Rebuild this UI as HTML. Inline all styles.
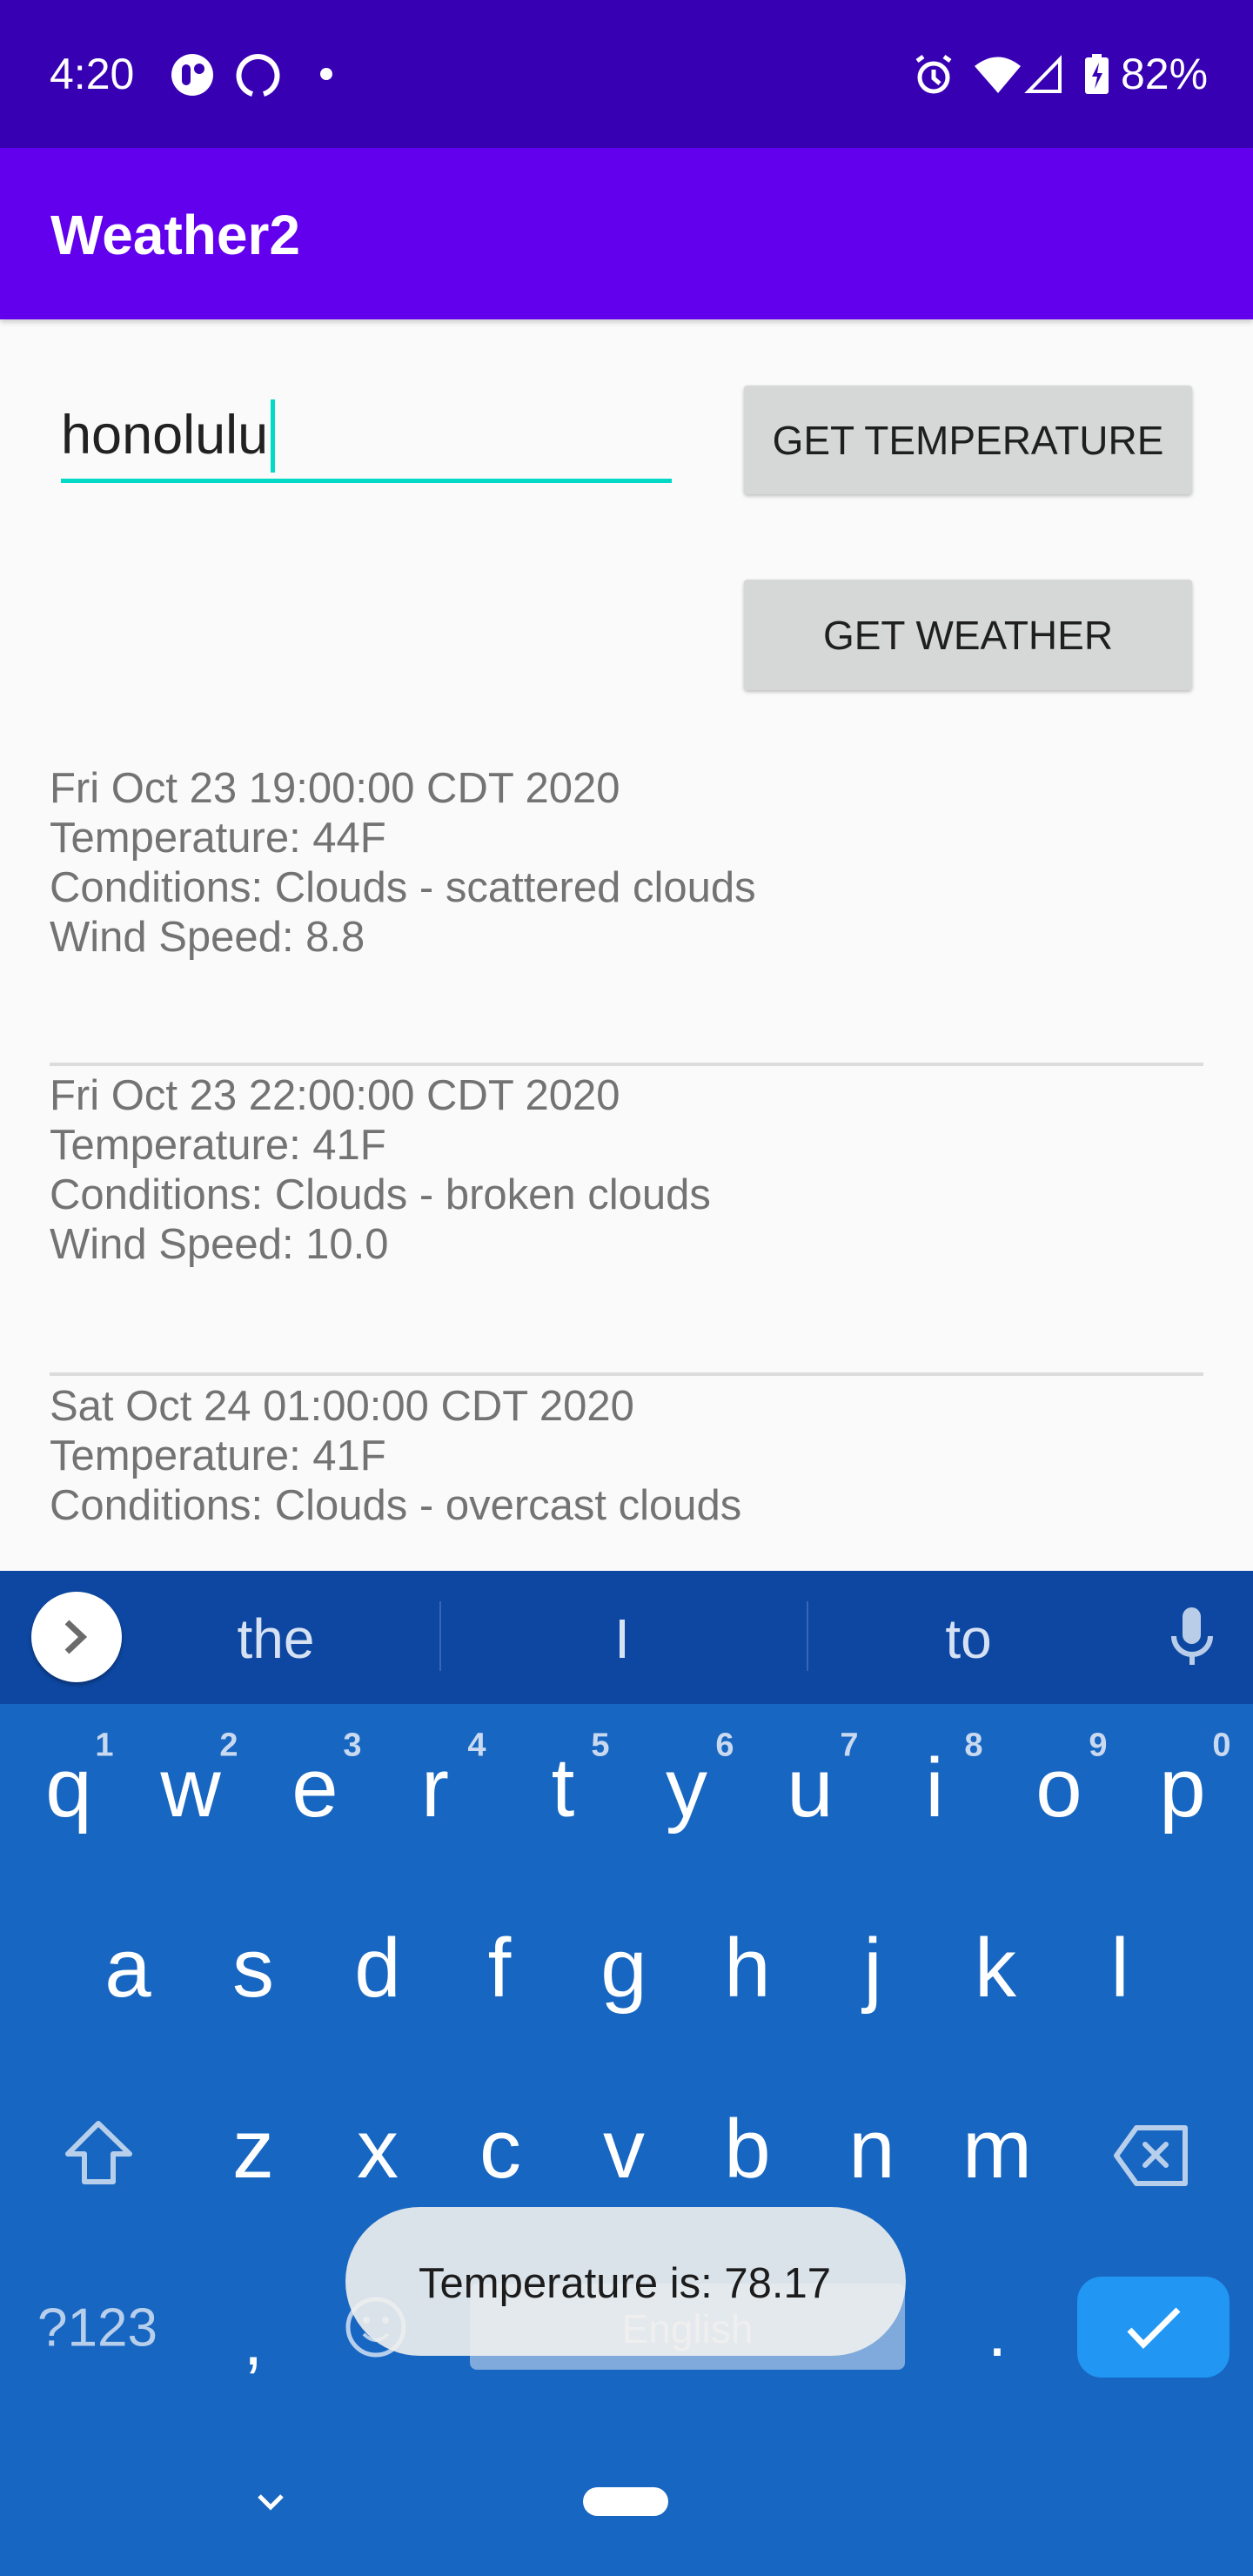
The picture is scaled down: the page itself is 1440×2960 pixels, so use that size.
<!DOCTYPE html>
<html><head><meta charset="utf-8"><style>
*{margin:0;padding:0;box-sizing:border-box}
body{width:1440px;height:2960px;position:relative;overflow:hidden;background:#fafafa;font-family:"Liberation Sans",sans-serif}
.a{position:absolute}
.c{position:absolute;transform:translate(-50%,-50%);white-space:nowrap}
.item{position:absolute;left:57px;font-size:49px;line-height:57px;color:#737373;white-space:nowrap}
.div{position:absolute;left:57px;width:1326px;height:4px;background:#dcdcdc}
.btn{position:absolute;left:855px;width:515px;background:#d6d7d7;border-radius:4px;box-shadow:0 2px 4px rgba(0,0,0,.25);color:#1f1f1f;font-size:46px;display:flex;align-items:center;justify-content:center}
.k{position:absolute;transform:translate(-50%,-50%);color:#fff;font-size:96px;line-height:1}
.n{position:absolute;transform:translate(-50%,-50%);color:#c9d9f0;font-size:38px;font-weight:bold}
</style></head><body>
<!-- status bar -->
<div class="a" style="left:0;top:0;width:1440px;height:170px;background:#3700b3"></div>
<div class="a" style="left:57px;top:56px;color:#fff;font-size:50px;line-height:58px">4:20</div>
<svg class="a" style="left:0;top:0" width="1440" height="170">
<circle cx="221" cy="86" r="24" fill="#fff"/>
<rect x="209" y="74" width="10" height="24" rx="5" fill="#3700b3"/>
<circle cx="229" cy="79" r="6" fill="#3700b3"/>
<path d="M290 108 A22 22 0 1 1 303 108" fill="none" stroke="#fff" stroke-width="6"/>
<circle cx="375" cy="85" r="7" fill="#fff"/>
<g fill="none" stroke="#fff" stroke-width="5">
<circle cx="1073" cy="89" r="16"/><path d="M1073 80v10l7 6M1054 70l7-5M1092 70l-7-5"/>
</g>
<path d="M1120 76 Q1147 55 1173 76 L1147 107Z" fill="#fff"/>
<path d="M1182 105 L1218 68 L1218 105Z" fill="none" stroke="#fff" stroke-width="4"/>
<rect x="1247" y="66" width="27" height="42" rx="3" fill="#fff"/><rect x="1255" y="62" width="11" height="5" fill="#fff"/>
<path d="M1263 72 L1255 88 L1261 88 L1258 102 L1267 84 L1261 84Z" fill="#3700b3"/>
</svg>
<div class="a" style="left:1288px;top:56px;color:#fff;font-size:50px;line-height:58px">82%</div>
<!-- app bar -->
<div class="a" style="left:0;top:170px;width:1440px;height:197px;background:#6200ee;box-shadow:0 3px 6px rgba(0,0,0,.2)"></div>
<div class="a" style="left:58px;top:232px;color:#fff;font-size:64px;font-weight:bold;line-height:76px">Weather2</div>
<!-- edit text -->
<div class="a" style="left:70px;top:460px;font-size:63px;line-height:80px;color:#212121">honolulu</div>
<div class="a" style="left:311px;top:459px;width:5px;height:84px;background:#03dac5"></div>
<div class="a" style="left:70px;top:550px;width:702px;height:5px;background:#03dac5"></div>
<div class="btn" style="top:443px;height:125px">GET TEMPERATURE</div>
<div class="btn" style="top:666px;height:127px">GET WEATHER</div>
<!-- list -->
<div class="item" style="top:878px">Fri Oct 23 19:00:00 CDT 2020<br>Temperature: 44F<br>Conditions: Clouds - scattered clouds<br>Wind Speed: 8.8</div>
<div class="div" style="top:1221px"></div>
<div class="item" style="top:1231px">Fri Oct 23 22:00:00 CDT 2020<br>Temperature: 41F<br>Conditions: Clouds - broken clouds<br>Wind Speed: 10.0</div>
<div class="div" style="top:1577px"></div>
<div class="item" style="top:1588px">Sat Oct 24 01:00:00 CDT 2020<br>Temperature: 41F<br>Conditions: Clouds - overcast clouds</div>
<!-- keyboard -->
<div class="a" style="left:0;top:1805px;width:1440px;height:1155px;background:#1766c1"></div>
<div class="a" style="left:0;top:1805px;width:1440px;height:153px;background:#0d47a1"></div>
<div class="a" style="left:36px;top:1829px;width:104px;height:104px;border-radius:50%;background:#fff;box-shadow:0 3px 4px rgba(0,0,0,.3)"></div>
<svg class="a" style="left:0;top:1800px" width="1440" height="160">
<path d="M77 64 L95 81 L77 98" fill="none" stroke="#6b6b6b" stroke-width="7"/>
<rect x="505" y="40" width="2" height="80" fill="#3a65b0"/><rect x="927" y="40" width="2" height="80" fill="#3a65b0"/>
<rect x="1359" y="47" width="21" height="42" rx="10.5" fill="#b9cde9"/>
<path d="M1349 80 A21 21 0 0 0 1391 80 M1370 101 V113" fill="none" stroke="#b9cde9" stroke-width="6"/>
</svg>
<div class="c" style="left:317px;top:1883px;color:#d6e2f4;font-size:64px">the</div>
<div class="c" style="left:715px;top:1883px;color:#d6e2f4;font-size:64px">I</div>
<div class="c" style="left:1113px;top:1883px;color:#d6e2f4;font-size:64px">to</div>
<!-- row1 -->
<div class="k" style="left:79px;top:2055px">q</div><div class="n" style="left:120px;top:2006px">1</div>
<div class="k" style="left:219px;top:2055px">w</div><div class="n" style="left:263px;top:2006px">2</div>
<div class="k" style="left:362px;top:2055px">e</div><div class="n" style="left:405px;top:2006px">3</div>
<div class="k" style="left:500px;top:2055px">r</div><div class="n" style="left:548px;top:2006px">4</div>
<div class="k" style="left:647px;top:2055px">t</div><div class="n" style="left:690px;top:2006px">5</div>
<div class="k" style="left:789px;top:2055px">y</div><div class="n" style="left:833px;top:2006px">6</div>
<div class="k" style="left:931px;top:2055px">u</div><div class="n" style="left:976px;top:2006px">7</div>
<div class="k" style="left:1074px;top:2055px">i</div><div class="n" style="left:1119px;top:2006px">8</div>
<div class="k" style="left:1217px;top:2055px">o</div><div class="n" style="left:1262px;top:2006px">9</div>
<div class="k" style="left:1359px;top:2055px">p</div><div class="n" style="left:1404px;top:2006px">0</div>
<!-- row2 -->
<div class="k" style="left:147px;top:2262px">a</div>
<div class="k" style="left:291px;top:2262px">s</div>
<div class="k" style="left:434px;top:2262px">d</div>
<div class="k" style="left:574px;top:2262px">f</div>
<div class="k" style="left:717px;top:2262px">g</div>
<div class="k" style="left:859px;top:2262px">h</div>
<div class="k" style="left:1003px;top:2262px">j</div>
<div class="k" style="left:1144px;top:2262px">k</div>
<div class="k" style="left:1287px;top:2262px">l</div>
<!-- row3 -->
<div class="k" style="left:291px;top:2470px">z</div>
<div class="k" style="left:434px;top:2470px">x</div>
<div class="k" style="left:575px;top:2470px">c</div>
<div class="k" style="left:717px;top:2470px">v</div>
<div class="k" style="left:859px;top:2470px">b</div>
<div class="k" style="left:1002px;top:2470px">n</div>
<div class="k" style="left:1146px;top:2470px">m</div>
<svg class="a" style="left:0;top:2400px" width="1440" height="360">
<path d="M113 40 L78 75 L97 75 L97 107 L130 107 L130 75 L149 75Z" fill="none" stroke="#b8cfec" stroke-width="6" stroke-linejoin="round"/>
<path d="M1306 45 L1362 45 L1362 109 L1306 109 L1283 77Z" fill="none" stroke="#b8cfec" stroke-width="6" stroke-linejoin="round"/>
<path d="M1316 64 L1340 88 M1340 64 L1316 88" stroke="#b8cfec" stroke-width="6" stroke-linecap="round"/>
<circle cx="432" cy="274" r="32" fill="none" stroke="#b8cfec" stroke-width="5"/>
<circle cx="421" cy="266" r="4" fill="#b8cfec"/><circle cx="443" cy="266" r="4" fill="#b8cfec"/>
<path d="M418 282 Q432 296 446 282" fill="none" stroke="#b8cfec" stroke-width="4"/>
</svg>
<div class="c" style="left:112px;top:2675px;color:#b8cfec;font-size:62px">?123</div>
<div class="c" style="left:291px;top:2690px;color:#fff;font-size:80px">,</div>
<div class="c" style="left:1146px;top:2680px;color:#fff;font-size:80px">.</div>
<div class="a" style="left:540px;top:2624px;width:500px;height:99px;border-radius:8px;background:#7faadb"></div>
<div class="c" style="left:790px;top:2676px;color:#e3ebf6;font-size:46px">English</div>
<div class="a" style="left:1238px;top:2616px;width:175px;height:116px;border-radius:28px;background:#2196f3"></div>
<svg class="a" style="left:1238px;top:2616px" width="175" height="116"><path d="M60 61 L76 78 L116 38" fill="none" stroke="#fff" stroke-width="7"/></svg>
<!-- toast -->
<div class="a" style="left:397px;top:2536px;width:644px;height:171px;border-radius:86px;background:rgba(240,239,238,0.9)"></div>
<div class="c" style="left:718px;top:2624px;color:#1c1c1c;font-size:49px">Temperature is: 78.17</div>
<!-- nav -->
<svg class="a" style="left:0;top:2840px" width="1440" height="80">
<path d="M298 28 L311 41 L324 28" fill="none" stroke="#fff" stroke-width="5"/>
<rect x="670" y="18" width="98" height="33" rx="16.5" fill="#fff"/>
</svg>
</body></html>
